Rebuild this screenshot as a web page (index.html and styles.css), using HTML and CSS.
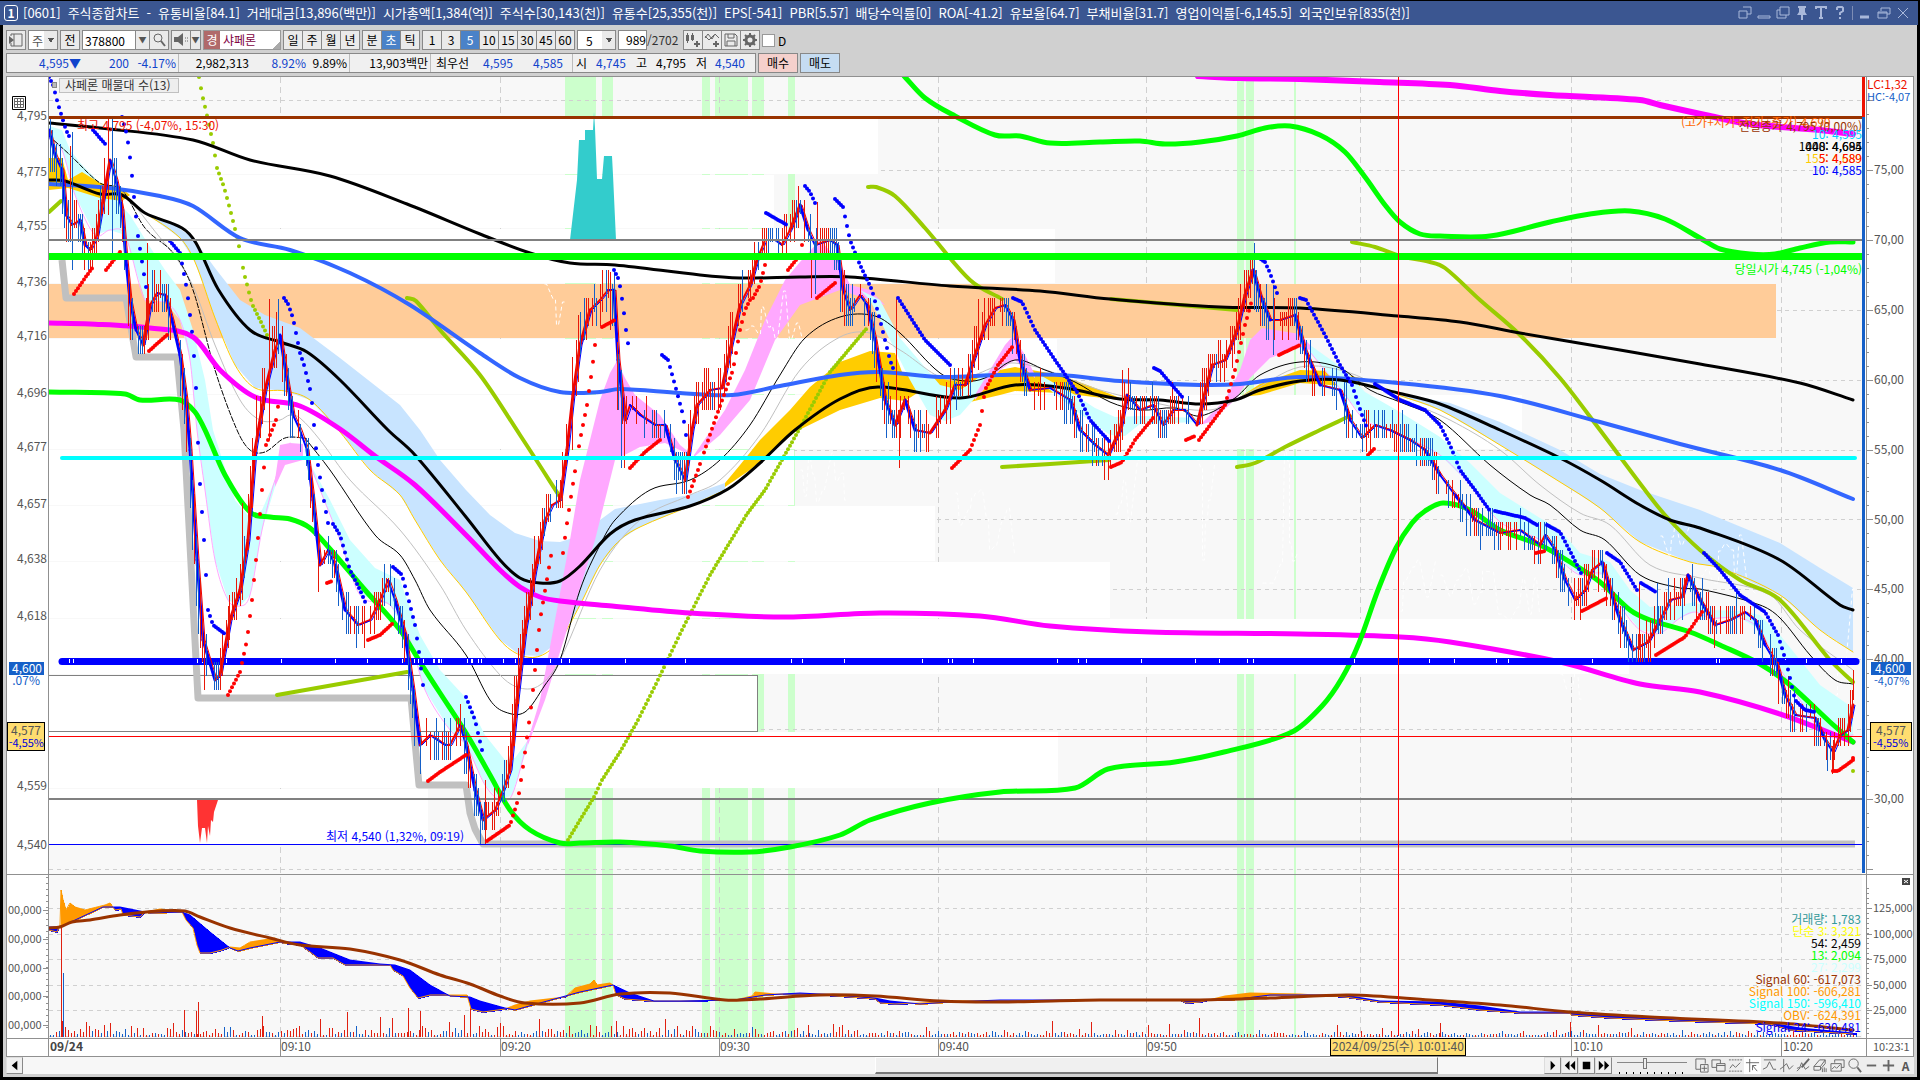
FILE: index.html
```html
<!DOCTYPE html>
<html lang="ko">
<head>
  <meta charset="UTF-8">
  <title>[0601] 주식종합차트</title>
  <link rel="stylesheet" href="styles.css">
</head>
<body>

  <header class="titlebar">
    <span class="badge">1</span>
    <h1 class="stats">
      <span>[0601]</span><span>주식종합차트</span><span>-</span><span>유통비율[84.1]</span><span>거래대금[13,896(백만)]</span><span>시가총액[1,384(억)]</span><span>주식수[30,143(천)]</span><span>유통수[25,355(천)]</span><span>EPS[-541]</span><span>PBR[5.57]</span><span>배당수익률[0]</span><span>ROA[-41.2]</span><span>유보율[64.7]</span><span>부채비율[31.7]</span><span>영업이익률[-6,145.5]</span><span>외국인보유[835(천)]</span>
    </h1>
    <div class="win-btns">
      <button aria-label="분리"><svg viewBox="0 0 14 14"><path d="M5 1h8v7H9M1 5h8v7H1z"/></svg></button>
      <button aria-label="접기"><svg viewBox="0 0 14 14"><path d="M1 10h12v2H1z"/></svg></button>
      <button aria-label="복사"><svg viewBox="0 0 14 14"><path d="M4 1h9v8H4zM4 4H1v8h9V9"/></svg></button>
      <button aria-label="고정"><svg viewBox="0 0 14 14"><path class="fill" d="M3 0h8v2H10v4l2 3H8v5H6V9H2l2-3V2H3z"/></svg></button>
      <button aria-label="글꼴"><svg viewBox="0 0 14 14"><path d="M2 3V1h10v2M7 1v11M5 12h4" stroke-width="2"/></svg></button>
      <button aria-label="도움말"><svg viewBox="0 0 14 14"><path d="M4 4V2l1-1h4l1 1v3L7 7v2M7 11v2" stroke-width="2"/></svg></button>
      <i></i>
      <button aria-label="최소화"><svg viewBox="0 0 14 14"><path d="M2 11h9" stroke-width="3"/></svg></button>
      <button aria-label="이전 크기"><svg viewBox="0 0 14 14"><path d="M4 5V2h9v6h-3M1 6h9v6H1zM1 7h9"/></svg></button>
      <button aria-label="닫기"><svg viewBox="0 0 14 14"><path d="M2 2l10 10M12 2L2 12"/></svg></button>
    </div>
  </header>

  <main class="window">
    <div class="toolbar">
      <button class="tb" aria-label="패널"><svg viewBox="0 0 16 16"><path d="M3 4V2h11v12H3v-3M6 2v12"/><path class="fill" d="M1 4l5 4-5 4z"/></svg></button>
      <select class="sel w-30" aria-label="종류"><option>주</option></select>
      <button class="tb">전</button>
      <div class="group">
        <input class="code" type="text" value="378800" aria-label="종목코드">
        <button class="tb arrow" aria-label="목록">▼</button>
        <button class="tb" aria-label="검색"><svg viewBox="0 0 16 16"><circle cx="7" cy="6" r="4"/><path d="M10 9l4 5" stroke-width="2"/></svg></button>
      </div>
      <div class="group">
        <button class="tb" aria-label="소리"><svg viewBox="0 0 16 16"><path class="fill" d="M1 5h4l5-4v13l-5-4H1z"/><path d="M12 6h1M12 9h1M14 6h1M14 9h1"/></svg></button>
        <button class="tb arrow mini" aria-label="소리 목록">▼</button>
      </div>
      <div class="stock"><b>경</b><span>샤페론</span></div>
      <div class="group"><button class="tb">일</button><button class="tb">주</button><button class="tb">월</button><button class="tb">년</button></div>
      <div class="group"><button class="tb">분</button><button class="tb on">초</button><button class="tb">틱</button></div>
      <div class="group"><button class="tb">1</button><button class="tb">3</button><button class="tb on">5</button><button class="tb">10</button><button class="tb">15</button><button class="tb">30</button><button class="tb">45</button><button class="tb">60</button></div>
      <select class="sel w-39" aria-label="간격"><option>5</option></select>
      <div class="count"><input type="text" value="989" aria-label="표시 봉수"><span>/2702</span></div>
      <div class="group">
        <button class="tb" aria-label="차트 추가"><svg viewBox="0 0 16 16"><path class="fill" d="M1 3h3v6H1zM6 3h3v5H6z"/><path d="M2.5 1v10M7.5 1v8"/><path d="M9 12h6M12 9v6" stroke-width="2"/></svg></button>
        <button class="tb" aria-label="지표 추가"><svg viewBox="0 0 16 16"><path d="M1 6l3-4 4 5 3-5 4 4M1 4l4 4 5-5"/><path d="M9 12h6M12 9v6" stroke-width="2"/></svg></button>
        <button class="tb" aria-label="저장"><svg viewBox="0 0 16 16"><path d="M2 2h10l2 2v10H2zM5 2v4h6V2M4 14V9h8v5"/></svg></button>
        <button class="tb" aria-label="설정"><svg viewBox="0 0 16 16"><circle cx="8" cy="8" r="4" stroke-width="3"/><path d="M8 1v3M8 12v3M1 8h3M12 8h3M3 3l2 2M11 11l2 2M13 3l-2 2M5 11l-2 2" stroke-width="2"/></svg></button>
      </div>
      <label class="chk"><input type="checkbox">D</label>
    </div>

    <div class="toolbar">
      <div class="quote">
        <div class="seg s1 down"><span>4,595▼</span><span>200</span><span>-4.17%</span></div>
        <div class="seg s2"><span>2,982,313</span><span class="down">8.92%</span><span>9.89%</span></div>
        <div class="seg s3"><span>13,903백만</span></div>
        <div class="seg s4"><span>최우선</span><span class="down">4,595</span><span class="down">4,585</span></div>
        <div class="seg s5"><span>시</span><span class="down">4,745</span><span>고</span><span>4,795</span><span>저</span><span class="down">4,540</span></div>
      </div>
      <button class="order buy">매수</button>
      <button class="order sell">매도</button>
    </div>

    <svg id="chart" class="chart" viewBox="6 76 1908 981" preserveAspectRatio="none" role="img" aria-label="샤페론 5초 차트"></svg>

    <footer class="bottom">
      <button class="sb" aria-label="왼쪽"><svg viewBox="0 0 16 16"><path class="blk" d="M11 3v10L5 8z"/></svg></button>
      <div class="track"><div class="thumb"></div></div>
      <button class="sb" aria-label="재생"><svg viewBox="0 0 16 16"><path class="blk" d="M6 3v10l5-5z"/></svg></button>
      <button class="sb" aria-label="뒤로"><svg viewBox="0 0 16 16"><path class="blk" d="M8 3v10L3 8zM14 3v10L9 8z"/></svg></button>
      <button class="sb" aria-label="정지"><svg viewBox="0 0 16 16"><path class="blk" d="M4 4h8v8H4z"/></svg></button>
      <button class="sb" aria-label="앞으로"><svg viewBox="0 0 16 16"><path class="blk" d="M3 3v10l5-5zM9 3v10l5-5z"/></svg></button>
      <input class="speed" type="range" min="0" max="10" value="4" aria-label="속도">
      <div class="tools">
        <button aria-label="영역 추가"><svg viewBox="0 0 16 16"><path d="M7 12H2V1h10v5M7 7h8v8H7zM11 8v6M8 11h6"/></svg></button>
        <button aria-label="겹치기"><svg viewBox="0 0 16 16"><path d="M6 10H1V2h9v4M6 6h9v8H6zM6 8h9"/></svg></button>
        <button aria-label="추세"><svg viewBox="0 0 16 16"><path d="M1 2h14M1 14h14" stroke-dasharray="2 1"/><path d="M2 11l3-4 3 3 5-5"/></svg></button>
        <button class="act" aria-label="십자선"><svg viewBox="0 0 16 16"><path d="M5 1v14M1 5h14M8 8l5 6M8 8h4M8 8v5"/></svg></button>
        <button aria-label="수평선"><svg viewBox="0 0 16 16"><path d="M2 2h13M1 12l4-2 3-6 4 8h3"/></svg></button>
        <button aria-label="수직선"><svg viewBox="0 0 16 16"><path d="M5 1v14M1 12l4-3 3-3 3 6 4-4"/></svg></button>
        <button aria-label="그리기"><svg viewBox="0 0 16 16"><path d="M1 14l4-4M1 11l3-1 2-5 4 7 4-3"/><path d="M6 10l8-9" stroke-width="2"/></svg></button>
        <button aria-label="지우개"><svg viewBox="0 0 16 16"><path d="M1 9l6-7h6L8 9zM1 9v4h6l6-7V2M8 9v4M10 11v4M12 10v5M14 11v4"/></svg></button>
        <button aria-label="창 배열"><svg viewBox="0 0 16 16"><path d="M5 5V2h10v8h-3M1 6h11v8H1zM2 12l3-3 2 2 4-4"/></svg></button>
        <button aria-label="돋보기"><svg viewBox="0 0 16 16"><circle cx="7" cy="6" r="5"/><path d="M11 10l4 5" stroke-width="2"/></svg></button>
        <button aria-label="축소"><svg viewBox="0 0 16 16"><path d="M3 8h10" stroke-width="2"/></svg></button>
        <button aria-label="확대"><svg viewBox="0 0 16 16"><path d="M2 8h12M8 2v12" stroke-width="2"/></svg></button>
        <button aria-label="자동">A</button>
      </div>
    </footer>
  </main>

  <script src="chart.js"></script>
</body>
</html>
```
FILE: styles.css
```css
* {
  box-sizing: border-box;
}
body {
  margin: 0;
  padding: 1px 0 3px;
  height: 100vh;
  background: #000;
  display: flex;
  flex-direction: column;
  font-family: "Noto Sans CJK KR", sans-serif;
  font-size: 12px;
  color: #000;
  overflow: hidden;
}
button, input, select {
  font: inherit;
  color: inherit;
  margin: 0;
  padding: 0;
  border-radius: 0;
}
svg {
  fill: none;
  stroke: #666;
}
svg .fill {
  fill: #666;
  stroke: none;
}
svg .blk {
  fill: #000;
  stroke: none;
}

/* title bar */
.titlebar {
  height: 24px;
  flex: none;
  display: flex;
  align-items: center;
  background: #3b5691;
  color: #fff;
  padding: 0 8px 0 4px;
  margin-right: 2px;
}
.badge {
  width: 14px;
  height: 16px;
  border: 1px solid #fff;
  border-radius: 3px;
  font-weight: bold;
  line-height: 14px;
  text-align: center;
  margin-right: 5px;
}
.stats {
  display: flex;
  gap: 7px;
  margin: 0;
  flex: 1;
  font-size: 13px;
  font-weight: normal;
  line-height: 22px;
  white-space: nowrap;
}
.win-btns {
  display: flex;
  align-items: center;
  gap: 5px;
}
.win-btns button {
  border: 0;
  background: none;
  width: 14px;
  height: 14px;
}
.win-btns svg {
  display: block;
  width: 14px;
  height: 14px;
  stroke: #a9b8da;
}
.win-btns .fill {
  fill: #a9b8da;
}
.win-btns i {
  width: 1px;
  height: 14px;
  background: #7d8db5;
}

/* window body */
.window {
  flex: 1;
  min-height: 0;
  display: flex;
  flex-direction: column;
  margin: 0 3px;
  padding: 5px 3px 3px;
  background: #d0d0d0;
}
.toolbar {
  flex: none;
  height: 20px;
  margin-bottom: 3px;
  display: flex;
  gap: 2px;
}
.group {
  display: flex;
}
.group > * + * {
  margin-left: -1px;
}
.tb {
  width: 20px;
  height: 20px;
  border: 1px solid #888;
  background: #eaeaea;
  line-height: 16px;
  text-align: center;
}
.tb svg {
  display: block;
  width: 16px;
  height: 16px;
  margin: 1px;
}
.tb.on {
  background: #4a82c8;
  color: #fff;
}
.tb.arrow {
  width: 15px;
  font-size: 8px;
  color: #555;
}
.tb.mini {
  width: 11px;
}
.sel {
  appearance: none;
  height: 20px;
  border: 1px solid #888;
  padding-left: 3px;
  background:
    linear-gradient(to top right, transparent 50%, #555 50%) right 6px top 7px / 3px 5px no-repeat,
    linear-gradient(to top left, transparent 50%, #555 50%) right 3px top 7px / 3px 5px no-repeat,
    linear-gradient(#eaeaea, #eaeaea) right / 13px 100% no-repeat,
    #fff;
}
.w-30 {
  width: 30px;
  color: #555;
}
.w-39 {
  width: 39px;
  padding-left: 8px;
}
.code {
  width: 54px;
  height: 20px;
  border: 1px solid #888;
  background: #fff;
  padding-left: 2px;
}
.stock {
  width: 78px;
  background: linear-gradient(to bottom right, transparent 50%, #aaa 50%) right bottom / 7px 7px no-repeat, #fff;
  border: 1px solid #999;
  color: #800040;
  display: flex;
  gap: 3px;
  line-height: 18px;
}
.stock b {
  width: 16px;
  background: #b06a6a;
  color: #fff;
  font-weight: normal;
  text-align: center;
}
.count {
  display: flex;
  width: 63px;
  line-height: 20px;
  color: #333;
}
.count input {
  width: 29px;
  height: 20px;
  border: 1px solid #888;
  background: #fff;
  text-align: right;
  color: #000;
}
.chk {
  display: flex;
  align-items: center;
  gap: 3px;
}
.chk input {
  appearance: none;
  width: 13px;
  height: 13px;
  background: #fff;
  border: 1px solid #999;
}
.quote {
  display: flex;
  width: 750px;
  background: #f0f0f0;
  border: 1px solid #888;
  line-height: 18px;
}
.seg {
  display: grid;
  border-right: 1px solid #bbb;
  padding-right: 2px;
  text-align: right;
  white-space: nowrap;
}
.seg:last-child {
  border: 0;
}
.s1 {
  width: 172px;
  grid-template-columns: 74px 48px 1fr;
}
.s2 {
  width: 171px;
  grid-template-columns: 70px 57px 1fr;
}
.s3 {
  width: 81px;
}
.s4 {
  width: 142px;
  padding-right: 9px;
  grid-template-columns: 38px 44px 1fr;
}
.s5 {
  flex: 1;
  padding-right: 10px;
  grid-template-columns: 14px 39px 21px 39px 21px 1fr;
}
.down {
  color: #1144cc;
}
.order {
  width: 40px;
  border: 1px solid #888;
  line-height: 16px;
}
.buy {
  background: #f5d0cc;
}
.sell {
  background: #c5dcf2;
}

/* chart */
.chart {
  flex: 1;
  min-height: 0;
  width: 100%;
  display: block;
  background: #fff;
}
.chart text {
  font-size: 12px;
  stroke: none;
  fill: #555;
}
.chart .axis {
  font-size: 11px;
}
.chart .end {
  text-anchor: end;
}
.chart .strong {
  font-weight: bold;
}

/* scroll bar and drawing tools */
.bottom {
  flex: none;
  height: 17px;
  display: flex;
  background: #eee;
}
.sb {
  width: 17px;
  height: 17px;
  border: 1px outset #ddd;
  background: #f0f0f0;
}
.sb svg {
  display: block;
  width: 15px;
  height: 15px;
}
.track {
  flex: 1;
  background: #f7f7f7;
  display: flex;
}
.thumb {
  width: 37%;
  margin-left: 56%;
  background: #f0f0f0;
  border: 1px solid #fff;
  border-right-color: #777;
  border-bottom: 2px solid #777;
}
.speed {
  appearance: none;
  width: 70px;
  height: 17px;
  margin: 0 6px 0 5px;
  background: linear-gradient(#888, #888) 0 5px / 100% 1px no-repeat,
    repeating-linear-gradient(90deg, #000 0 1px, transparent 1px 7px) 2px 15px / 68px 2px no-repeat;
}
.speed::-webkit-slider-thumb {
  appearance: none;
  width: 4px;
  height: 11px;
  margin-top: -4px;
  background: #eee;
  border: 1px solid #777;
}
.tools {
  display: flex;
}
.tools button {
  width: 17px;
  height: 17px;
  border: 0;
  background: none;
  font-weight: bold;
  line-height: 17px;
  color: #555;
}
.tools .act {
  background: #fff;
}
.tools svg {
  display: block;
  width: 15px;
  height: 15px;
  margin: 1px;
}
```
FILE: chart.js
```js
const svg = document.getElementById('chart');
let out = '';

let seed = 7;
function rnd() {
  seed = (seed * 16807) % 2147483647;
  return seed / 2147483647;
}

// "x,y x,y ..." -> [[x, y], ...]
function pts(s) {
  return s.trim().split(/\s+/).map(p => p.split(',').map(Number));
}

function at(p, x) {
  for (let i = 1; i < p.length; i++) {
    if (x <= p[i][0]) {
      const t = (x - p[i - 1][0]) / (p[i][0] - p[i - 1][0] || 1);
      return p[i - 1][1] + (p[i][1] - p[i - 1][1]) * t;
    }
  }
  return p[p.length - 1][1];
}

// smooth curve through the points
function smooth(p) {
  let d = 'M' + p[0];
  for (let i = 0; i < p.length - 1; i++) {
    const a = p[i - 1] || p[i], b = p[i], c = p[i + 1], e = p[i + 2] || c;
    const h = (c[0] - b[0]) / 3;
    const m1 = (c[1] - a[1]) / (c[0] - a[0] || 1);
    const m2 = (e[1] - b[1]) / (e[0] - b[0] || 1);
    d += `C${b[0] + h},${(b[1] + m1 * h).toFixed(1)} ${c[0] - h},${(c[1] - m2 * h).toFixed(1)} ${c}`;
  }
  return d;
}

function rect(x, y, x2, y2, fill) {
  out += `<rect x="${x}" y="${y}" width="${x2 - x}" height="${y2 - y}" fill="${fill}" stroke="none"/>`;
}
function line(x, y, x2, y2, color, w = 1, extra = '') {
  const o = w % 2 ? 0.5 : 0;
  out += `<path d="M${x + (x === x2 ? o : 0)} ${y + (y === y2 ? o : 0)}L${x2 + (x === x2 ? o : 0)} ${y2 + (y === y2 ? o : 0)}" stroke="${color}" stroke-width="${w}" ${extra}/>`;
}
function curve(s, color, w, extra = '') {
  out += `<path d="${smooth(pts(s))}" stroke="${color}" stroke-width="${w}" stroke-linecap="round" stroke-linejoin="round" ${extra}/>`;
}
function poly(s, color, w, extra = '') {
  out += `<polyline points="${s}" stroke="${color}" stroke-width="${w}" stroke-linejoin="round" ${extra}/>`;
}
function area(up, low, fill) {
  const l = pts(low);
  out += `<polygon points="${up} ${l.sort((a, b) => b[0] - a[0]).join(' ')}" fill="${fill}" stroke="none"/>`;
}
function dots(s, color, step = 2, r = 2) {
  const p = pts(s);
  for (let x = p[0][0]; x <= p[p.length - 1][0]; x += step) {
    out += `<circle cx="${x}" cy="${at(p, x).toFixed(1)}" r="${r}" fill="${color}" stroke="none"/>`;
  }
}
function text(x, y, t, color = '#555', cls = '') {
  out += `<text x="${x}" y="${y}" class="${cls}" style="fill:${color}">${t}</text>`;
}

/* ---------- background ---------- */
rect(49, 77, 1862, 1038, '#f8f8f8');
for (const [a, b] of [[565, 596], [602, 613], [702, 710], [715, 748], [752, 764], [788, 795], [1237, 1244], [1246, 1254], [1294, 1296]]) {
  rect(a, 77, b, 1038, '#ccffcc');
}
const gridX = [280, 500, 719, 938, 1146, 1360, 1571, 1781];
for (let i = 0; i < 12; i++) line(49, Math.round(100 + i * 69.9), 1862, Math.round(100 + i * 69.9), '#d0d0d0', 1, 'stroke-dasharray="4 4"');
for (const y of [908, 934, 959, 985, 1010, 1036]) line(49, y, 1862, y, '#d0d0d0', 1, 'stroke-dasharray="4 4"');
for (const x of gridX) line(x, 77, x, 1038, '#d0d0d0', 1, 'stroke-dasharray="6 4"');

// volume by price
for (const [y, y2, x] of [[119, 174, 878], [175, 228, 774], [229, 283, 1055], [339, 394, 1057], [395, 449, 1522], [450, 505, 794], [506, 561, 935], [562, 618, 1110], [619, 674, 1629], [675, 731, 757], [732, 788, 1058], [789, 844, 428]]) {
  rect(49, y, x, y2, '#fff');
}
rect(49, 284, 1776, 338, '#ffcc99');
line(49, 675, 757, 675, '#808080');
line(49, 731, 757, 731, '#808080');
line(757, 675, 757, 732, '#808080');

/* ---------- clouds ---------- */
const blueUp = '145,213 170,222 193,238 215,268 240,300 265,315 300,328 340,358 400,405 420,430 440,460 466,490 490,515 515,533 540,541 560,542 580,536 600,520 615,509 660,500 690,495 725,483';
const goldLow = '145,213 180,238 195,262 215,318 235,365 255,388 285,391 310,400 340,432 370,470 400,495 415,520 440,560 466,592 500,640 520,655 540,656 560,640 580,605 600,565 620,540 640,527 690,506 725,490';
area(blueUp, goldLow, '#c8e4ff');
curve(goldLow, '#ffcc00', 1);
const blueUp2 = '1398,393 1450,403 1500,422 1560,450 1600,474 1640,490 1700,510 1780,543 1820,568 1853,588';
const goldLow2 = '1398,395 1440,410 1500,445 1560,482 1600,508 1640,542 1690,562 1720,568 1780,595 1820,630 1853,652';
area(blueUp2, goldLow2, '#c8e4ff');
curve(goldLow2, '#ffcc00', 1);

area('49,126 62,130 70,150 82,165 100,183 130,215 150,247 165,270 180,290 193,330 205,380 213,430 235,500 250,518 262,510 275,480',
  '49,138 62,150 75,195 95,235 110,230 125,235 145,300 165,302 180,320 190,360 197,430 205,490 215,560 228,600 240,606 250,595 262,530 275,487', '#ccffff');
curve('49,138 62,150 75,195 95,235 110,230 125,235 145,300 165,302 180,320 190,360 197,430 205,490 215,560 228,600 240,606 250,595 262,530 275,480 290,443', '#ffa8ff', 1);
area('275,480 280,445 290,443 303,444', '275,487 285,465 303,460', '#ffa8ff');
area('308,460 330,500 350,540 375,568 400,580 420,635 440,670 466,698 485,735 505,760 515,758 528,740',
  '308,460 340,540 360,595 390,605 410,640 425,690 450,730 466,745 485,785 500,800 512,795 528,745', '#ccffff');
curve('308,460 340,540 360,595 390,605 410,640 425,690 450,730 466,745 485,785 500,800 512,795 528,740', '#ffa8ff', 1);
area('528,740 540,700 555,620 570,540 580,480 590,440 600,400 610,373 617,361 625,378 635,395 660,415 680,445 690,453',
  '690,455 665,443 640,447 615,460 605,500 595,540 570,620 545,700 528,745', '#ffa8ff');
area('49,158 62,158 68,180 82,172 100,183 120,187 130,195', '122,201 100,198 68,188 49,190', '#ffcc00');
area('725,483 740,465 760,440 790,410 810,387 840,362 870,351 895,353 902,372 940,377 970,378 1000,370 1015,367 1060,375 1090,386 1120,398',
  '725,487 750,470 795,432 840,410 880,398 905,401 925,388 970,402 1000,395 1015,391 1060,393 1120,400', '#ffcc00');
area('694,455 725,410 745,370 765,320 785,280 800,262 820,240 840,262 850,285 870,290 885,305',
  '885,305 840,290 800,305 775,340 750,400 720,435 694,457', '#ffa8ff');
area('860,290 880,300 900,338 940,385 960,390 990,370', '870,300 890,340 910,380 930,415 945,421 960,415 975,398 990,378', '#ccffff');
area('975,395 990,370 1005,345 1013,336 1025,355 1035,375', '1035,378 1015,360 1000,370 975,400', '#ffa8ff');
area('1040,375 1075,395 1095,408 1115,417 1140,416 1200,418', '1040,382 1075,410 1110,435 1125,436 1140,424 1200,422', '#ccffff');
area('1240,397 1260,384 1300,370 1330,371 1360,378', '1360,386 1330,385 1300,383 1260,395', '#ffcc00');
area('1200,425 1225,400 1240,370 1250,340 1262,328 1300,334 1310,345', '1310,350 1300,347 1270,358 1250,378 1235,400 1210,422', '#ffa8ff');
const pinkLow = '1310,352 1345,395 1365,420 1400,435 1440,455 1470,485 1500,522 1540,540 1560,560 1580,575 1605,575 1620,605 1640,630 1660,633 1680,618 1695,612 1710,618 1740,618 1760,630 1775,660 1800,700 1825,735 1853,735';
area('1310,345 1345,370 1365,392 1400,412 1440,437 1470,463 1500,493 1540,518 1560,530 1580,553 1610,562 1630,590 1650,607 1680,605 1695,602 1710,610 1740,611 1760,615 1780,635 1800,660 1820,685 1853,708', pinkLow, '#ccffff');
curve(pinkLow, '#ffa8ff', 1);

/* ---------- faint volume traces ---------- */
const traces = [[544, 566, 284, 340], [745, 805, 284, 345], [800, 845, 450, 505], [955, 1015, 455, 560], [1115, 1145, 450, 540], [1195, 1220, 450, 560], [1262, 1300, 450, 600], [1400, 1440, 560, 618], [1440, 1545, 565, 620], [1560, 1580, 660, 700], [1660, 1695, 495, 560], [1700, 1760, 530, 600], [1835, 1853, 585, 700]];
for (const [a, b, y, y2] of traces) {
  let s = '';
  for (let x = a; x < b; x += 2 + Math.floor(rnd() * 8)) {
    const v = Math.round(y + (y2 - y) * rnd());
    s += `${x}.5,${v} ${x + 2}.5,${v} `;
  }
  poly(s, '#fff', 1, 'stroke-dasharray="4 3"');
}

/* ---------- thin averages ---------- */
curve('122,190 150,225 190,280 215,345 240,400 260,420 280,420 290,415 300,418 320,440 350,480 400,530 440,585 466,630 500,675 520,688 540,685 560,660 600,570 640,520 690,495 720,480 760,435 800,370 840,337 870,333 900,350 950,380 1015,363 1100,390 1150,402 1210,410 1250,392 1300,367 1350,373 1400,398 1450,420 1500,450 1540,485 1580,513 1610,525 1650,565 1700,578 1770,595 1800,630 1853,670', '#c0c0c0', 1);
curve('49,136 70,155 100,183 122,190 145,228 175,255 193,290 215,370 237,430 250,450 265,452 285,438 305,438', '#000', 1, 'stroke-dasharray="5 2"');
curve('305,438 330,470 375,535 400,555 415,580 430,610 466,655 490,700 505,712 525,712 545,685 560,660 580,590 600,545 615,520 650,490 690,480 720,460 750,425 780,375 805,338 840,317 875,316 900,333 940,373 965,381 985,378 1015,360 1045,370 1075,382 1110,402 1140,410 1175,408 1200,416 1235,398 1260,375 1300,362 1340,368 1370,390 1400,402 1440,420 1490,465 1530,495 1550,505 1580,530 1605,540 1640,575 1680,588 1700,589 1760,605 1780,618 1810,655 1835,680 1853,684', '#000', 1);

/* ---------- histogram marks ---------- */
out += '<polygon points="570,240 577,180 579,140 585,140 585,130 593,130 594,112 595,128 597,179 602,179 604,156 612,156 613,175 616,240" fill="#33cccc" stroke="none"/>';
out += '<polygon points="197,800 218,800 214,812 213,822 211,820 210,836 208,826 207,843 205,828 202,828 200,843 198,826" fill="#ff3333" stroke="none"/>';

/* ---------- levels and slow averages ---------- */
poly('62,260 66,298 126,298 136,357 177,357 184,430 198,698 411,698 419,785 466,785 470,813 475,829 483,844 1855,844', '#c0c0c0', 7);
line(49, 799, 1862, 799, '#808080', 2);
line(49, 844, 1862, 844, '#0000ff');

const olive = '#99cc00';
dots('199,77 202,94 206,111 213,143 217,168 224,187 231,213 238,241 244,273 252,304 260,320 268,337', olive);
dots('568,840 580,820 594,797 602,780 620,752 637,722 655,686 682,630 710,575 747,514 765,490 800,428 830,372 867,328', olive, 2);
for (const s of ['49,212 61,201', '407,298 416,301 440,330 480,375 520,435 560,497', '277,695 407,672', '868,187 876,187 895,196 925,228 970,280 1002,299', '1002,467 1050,464 1109,460', '1237,467 1255,463 1285,447 1320,430 1350,416', '1111,299 1237,310', '1352,242 1375,247 1400,256 1430,262 1445,268 1480,300 1520,335 1560,378 1600,430 1645,490 1665,515 1700,550 1740,580 1780,600 1830,660 1853,682']) {
  curve(s, olive, 4);
}

curve('49,184 110,188 160,196 193,206 240,238 290,250 350,273 410,305 480,353 520,378 560,392 600,392 620,389 680,393 732,395 780,386 840,375 880,372 940,377 1000,375 1060,375 1120,381 1200,385 1240,384 1300,377 1398,383 1500,396 1600,422 1680,444 1780,470 1853,499', '#3366ff', 4);
curve('49,123 100,128 193,140 250,160 330,176 407,204 480,234 530,253 570,263 615,265 700,275 740,278 800,277 850,277 950,286 1040,291 1110,299 1220,307 1300,308 1398,316 1460,322 1520,333 1620,350 1700,364 1800,383 1853,400', '#000', 3);
curve('49,180 65,181 100,194 122,195 145,213 182,228 196,243 218,289 250,330 280,342 307,352 340,380 388,430 415,455 466,517 500,560 520,578 540,583 560,581 580,566 610,534 635,520 690,506 728,489 760,463 795,430 840,399 878,387 960,398 1015,385 1065,388 1120,399 1160,400 1200,404 1235,400 1260,390 1300,381 1340,380 1398,393 1440,404 1500,430 1560,458 1600,480 1640,505 1670,520 1700,528 1780,560 1840,605 1853,610', '#000', 3);
curve('49,323 90,324 150,328 193,337 220,370 255,397 300,406 340,429 375,456 415,485 466,535 500,570 520,587 540,597 560,601 612,606 690,613 784,617 880,613 980,616 1050,626 1150,632 1300,634 1400,637 1450,642 1560,662 1640,684 1700,692 1780,714 1853,742', '#ff00ff', 5);
curve('1198,76 1240,78 1300,79 1380,82 1450,85 1500,91 1550,95 1640,100 1660,105 1710,116 1750,124 1820,130 1853,134', '#ff00ff', 6);
curve('904,76 925,98 955,116 995,135 1020,136 1050,143 1100,142 1140,141 1165,144 1200,142 1237,136 1265,128 1290,126 1320,135 1345,152 1365,177 1385,205 1400,222 1420,234 1440,236 1490,236 1550,222 1590,214 1630,211 1665,219 1700,238 1720,249 1750,254 1775,254 1800,248 1830,242 1853,242', '#00ff00', 5);
curve('49,392 125,394 140,400 180,400 195,412 205,430 225,475 250,512 270,517 290,519 310,528 330,549 365,590 400,630 420,662 440,693 466,733 490,775 510,810 530,830 560,843 580,843 620,842 670,846 700,851 750,852 790,847 840,835 870,820 930,803 1000,792 1075,788 1108,769 1175,762 1224,752 1292,732 1322,706 1342,678 1359,643 1378,590 1396,548 1412,523 1425,511 1443,503 1470,510 1500,530 1540,545 1570,562 1600,582 1630,610 1650,620 1690,632 1720,645 1760,664 1790,685 1830,722 1853,742', '#00ff00', 5);

line(62, 661, 1856, 661, '#0000ff', 7, 'stroke-linecap="round"');
for (let i = 0; i < 60; i++) {
  const x = i < 20 ? Math.round(400 + rnd() * 170) : Math.round(62 + rnd() * 1790);
  line(x, 659, x, 663, '#fff');
}

/* ---------- candles ---------- */
const price = pts('49,130 55,155 62,170 66,215 72,225 80,220 85,245 90,250 97,235 103,200 110,160 116,180 122,210 126,260 130,300 136,330 143,345 150,305 157,293 165,295 172,320 180,355 186,400 190,450 197,560 203,640 215,680 220,675 230,620 240,590 248,540 255,450 265,390 275,350 280,335 287,380 293,415 300,430 307,450 313,500 320,565 328,550 335,565 345,610 358,625 370,620 380,600 388,580 395,600 405,635 413,690 420,745 430,735 445,745 450,745 460,725 466,745 475,790 483,820 495,810 503,790 510,770 517,700 525,630 535,570 545,520 552,505 560,500 567,450 573,395 580,345 590,310 600,300 608,290 614,290 618,360 625,420 630,405 640,415 655,425 665,425 675,460 685,480 692,430 697,405 710,390 722,388 730,350 740,305 750,285 757,260 765,240 775,240 782,245 790,230 800,205 808,230 815,245 830,240 837,245 843,290 850,310 860,295 867,305 875,340 885,400 895,425 905,400 915,430 930,433 945,410 955,385 965,385 975,355 985,325 995,308 1005,305 1013,320 1020,360 1030,390 1050,388 1070,400 1080,430 1095,445 1108,455 1120,430 1127,395 1140,410 1153,405 1163,425 1173,410 1185,410 1197,425 1203,400 1212,365 1225,360 1237,330 1245,295 1253,270 1260,295 1270,320 1280,320 1295,315 1305,350 1320,385 1340,390 1350,420 1362,438 1375,425 1390,430 1410,440 1425,450 1440,475 1455,495 1475,520 1500,533 1520,530 1540,545 1545,535 1555,550 1565,580 1575,600 1585,590 1592,570 1602,562 1610,590 1620,620 1633,650 1648,642 1660,620 1670,600 1682,597 1688,575 1700,600 1715,625 1730,620 1745,612 1755,620 1765,645 1777,665 1785,695 1795,715 1815,718 1825,740 1833,752 1840,735 1848,730 1853,705');
const tick = 14;
const snap = y => 844 - Math.round((844 - y) / tick) * tick;
// fast average pair, coloured by direction
for (let i = 1; i < price.length; i++) {
  const a = price[i - 1], b = price[i], up = b[1] < a[1];
  const w = Math.abs(b[1] - a[1]) > 20 ? 3 : 2;
  line(a[0], a[1], b[0], b[1], up ? '#f00000' : '#0000ff', w, 'stroke-linecap="round"');
  line(a[0] + 2, a[1], b[0] + 2, b[1], up ? '#0000ff' : '#f00000', 1);
}
for (let x = 50; x < 1854; x += 2) {
  const y = at(price, x), slope = at(price, x + 3) - at(price, x - 3);
  const r = rnd(), r2 = rnd(), r3 = rnd(), r4 = rnd();
  if (r < 0.25) continue;
  const top = snap(y - 5 - r2 * 16 - Math.max(0, -slope) / 2);
  const low = snap(y + 5 + r3 * 16 + Math.max(0, slope) / 2);
  const up = r4 < (slope < 0 ? 0.85 : 0.35);
  line(x, top, x, Math.min(844, Math.max(low, top + 2)), up ? '#e81808' : '#1560c8');
}
// long wicks: x, high, low, rising
for (const [x, a, b, c] of [[70, 146, 240, 1], [72, 132, 270, 0], [108, 118, 215, 1], [112, 118, 253, 0], [147, 243, 330, 1], [269, 299, 440, 1], [278, 299, 350, 0], [229, 595, 640, 1], [242, 503, 600, 1], [485, 780, 844, 1], [578, 315, 380, 1], [572, 357, 450, 1], [610, 272, 330, 1], [617, 342, 410, 1], [621, 370, 468, 0], [624, 400, 468, 1], [811, 258, 298, 1], [815, 240, 294, 0], [817, 202, 245, 1], [896, 299, 410, 1], [899, 410, 468, 1], [978, 299, 370, 1], [1110, 430, 468, 1], [1122, 370, 440, 1], [1254, 243, 310, 0], [1273, 285, 355, 0], [1639, 583, 650, 1], [1657, 583, 630, 0], [1833, 740, 771, 1], [1827, 740, 771, 0], [1853, 670, 700, 1]]) {
  line(x, a, x, b, c ? '#e81808' : '#1560c8');
}

/* ---------- parabolic dots ---------- */
for (const s of ['49,77 53,85 58,104 66,130 70,138', '93,130 106,145', '122,117 127,135 131,165 134,197 138,236 146,287', '170,241 180,253 187,290 193,340 196,388 199,470 204,540 208,610 213,625 225,634', '284,298 288,304 293,318 300,353 304,365 310,389 313,410 315,440 318,465 322,490 328,523', '333,524 340,535 350,570 360,590 366,604', '393,567 402,575 410,605 415,625 419,652 423,685', '466,697 475,720 482,750', '614,270 619,280 623,305 626,330 629,350', '662,355 668,360 675,385 683,415 686,435', '766,213 787,225', '805,186 810,192 815,203', '835,199 843,207 850,240 860,265 872,290 880,320 890,360 893,368', '898,298 925,340 951,366', '1013,298 1022,302 1035,330 1055,360 1077,392 1090,420 1109,441', '1154,368 1160,371 1183,398', '1259,258 1265,262 1270,273 1277,293', '1300,298 1306,300 1325,335 1340,365 1352,385 1362,415 1367,428', '1375,384 1400,400 1425,410 1440,425 1450,445 1460,470 1475,490 1490,511', '1495,511 1525,518 1537,525', '1547,525 1560,532 1572,555 1582,575', '1607,553 1620,562 1637,590', '1641,583 1656,592', '1704,553 1720,570 1740,595 1765,612 1778,635 1787,665 1795,700 1805,710 1815,712']) {
  dots(s, '#0000ff');
}
for (const s of ['74,294 85,278 93,267', '106,270 120,252', '149,351 168,334', '228,695 240,672 247,640 252,600 257,550 262,490 266,445 276,420 279,400', '327,583 332,581', '368,640 380,635 392,624', '428,781 440,772 466,755', '487,841 510,825 518,800 524,760 532,700 540,620 552,550', '563,553 566,530 572,490 580,440 587,405 592,370 595,345', '602,327 615,320', '630,468 645,452 660,440', '688,497 698,470 715,420 733,370 740,330 745,310 750,300', '753,298 760,285 765,265', '788,270 800,255 803,240', '817,298 835,283', '952,468 970,450 980,425 985,390 998,365 1013,346', '1111,467 1122,462 1135,440 1153,418', '1186,440 1195,436', '1199,440 1225,405 1235,370 1245,325 1252,300', '1279,355 1300,345', '1368,455 1375,448', '1536,553 1545,551', '1582,611 1607,598', '1656,655 1685,637 1702,612', '1833,771 1838,771 1853,760']) {
  dots(s, '#ff0000');
}
dots('1853,758 1854,758', '#ff0000');
dots('1853,771 1854,771', olive);

line(49, 240, 1862, 240, '#808080', 2);
line(49, 256, 1862, 256, '#00ff00', 7);
line(62, 458, 1855, 458, '#00ffff', 4, 'stroke-linecap="round"');
line(49, 117, 1862, 117, '#993300', 3);
line(49, 736, 1862, 736, '#ff0000');

/* ---------- volume and OBV pane ---------- */
for (let x = 50; x < 1857; x += 3) {
  const big = rnd() > 0.93 ? rnd() * 22 : 0;
  const k = x < 860 ? 1 : 0.45;
  const h = Math.round(2 + rnd() * rnd() * 13 * k + big * (x < 860 ? 0.7 : 0.5));
  line(x, 1037 - h, x, 1037, rnd() < 0.25 + h / 16 ? '#e02010' : '#1560c8');
}
for (const [x, h, c] of [[61, 138, 1], [63, 64, 0], [184, 27, 1], [196, 26, 1], [198, 35, 1], [262, 21, 1], [392, 19, 1], [408, 29, 1], [420, 26, 1], [470, 30, 1], [616, 16, 1], [808, 12, 1], [1199, 19, 1], [1440, 14, 1], [1570, 15, 1]]) {
  line(x, 1037 - h, x, 1037, c ? '#e02010' : '#1560c8');
}
const sig = pts('49,927 60,927 103,907 120,907 150,913 182,912 190,915 210,932 230,948 238,951 250,948 280,942 300,942 320,948 350,960 380,964 395,965 410,970 430,985 450,996 470,997 480,1001 505,1008 515,1010 540,1003 580,992 613,985 630,993 654,1001 680,1001 735,1000 765,995 800,993 840,995 875,998 890,1001 920,1004 950,1002 1000,1000 1230,1000 1270,995 1345,995 1380,1001 1440,1002 1480,1006 1520,1012 1570,1012 1610,1016 1680,1020 1770,1023 1800,1028 1853,1033');
const obv = pts('49,930 57,932 60,925 61,890 63,900 66,910 70,903 75,907 85,910 105,905 110,903 115,910 121,909 123,915 140,917 145,912 160,909 182,912 186,920 193,928 197,945 200,953 210,953 222,950 230,947 240,948 250,942 275,938 282,943 300,945 310,952 318,958 333,958 345,965 390,965 393,970 403,976 410,988 418,998 430,995 467,995 471,1009 483,1012 505,1009 515,1005 530,1001 565,997 575,988 590,984 594,980 597,985 610,983 613,985 616,995 625,999 650,1001 680,1001 735,1000 752,996 755,992 775,994 810,994 850,997 875,999 880,1003 895,1004 920,1003 960,1001 1180,1000 1186,1003 1200,1002 1225,996 1250,993 1300,994 1345,997 1380,1002 1440,1005 1480,1010 1520,1013 1570,1013 1571,1015 1610,1018 1680,1021 1770,1024 1790,1030 1853,1034');
for (let x = 49; x < 1857; x++) {
  const a = at(obv, x), b = at(sig, x);
  line(x, Math.round(Math.min(a, b)), x, Math.round(Math.max(a, b)) + 1, a < b ? '#ff9900' : '#0000ff');
}
poly(obv.join(' '), '#ff9900', 1);
poly(sig.join(' '), '#0000ff', 1);
curve('49,928 60,927 72,922 90,920 120,915 160,911 185,911 200,917 230,928 270,938 300,945 350,949 400,960 440,975 470,984 500,996 525,1003 580,1003 620,994 670,993 725,1000 760,999 820,995 875,996 940,1001 1000,1002 1100,1000 1200,1000 1270,998 1350,995 1430,1000 1500,1005 1570,1012 1650,1017 1780,1023 1853,1030', '#993300', 3);

/* ---------- frame and axes ---------- */
const frame = '#909090';
rect(1862, 77, 1865, 117, '#ee1100');
rect(1862, 117, 1865, 873, '#1560c8');
rect(6, 76, 49, 1057, '#fff');
rect(1866, 76, 1914, 1057, '#fff');
rect(6, 1038, 1914, 1057, '#fff');
line(6, 76, 1914, 76, frame);
line(6, 874, 1914, 874, frame);
line(6, 1038, 1914, 1038, frame);
line(6, 1056, 1914, 1056, frame);
line(6, 76, 6, 1057, frame);
line(48, 76, 48, 1057, frame);
line(1866, 76, 1866, 1057, frame);
line(1913, 76, 1913, 1057, frame);
for (const x of gridX) if (x !== 1360) line(x, 1038, x, 1057, frame);

[['4,795', 120], ['4,775', 176], ['4,755', 230], ['4,736', 286], ['4,716', 340], ['4,696', 397], ['4,677', 451], ['4,657', 508], ['4,638', 563], ['4,618', 620], ['4,559', 790], ['4,540', 849]].forEach(([t, y]) => text(47, y, t, '#555', 'end'));
[910, 939, 968, 996, 1025].forEach(y => {
  text(8, y + 4, '00,000', '#555', 'axis');
  line(43, y, 48, y, frame);
});
for (let y = 877; y < 1030; y += 6) line(46, y, 48, y, frame);
for (let i = 0; i <= 55; i++) {
  const y = Math.round(100 + i * 13.98);
  line(1867, y, i % 5 ? 1869 : 1873, y, frame);
}
['75,00', '70,00', '65,00', '60,00', '55,00', '50,00', '45,00', '40,00', '', '30,00'].forEach((t, i) => {
  if (t) text(1874, Math.round(174 + i * 69.9), t);
});
[['125,000', 908], ['100,000', 934], ['75,000', 959], ['50,000', 985], ['25,000', 1010]].forEach(([t, y]) => {
  text(1873, y + 4, t, '#555', 'axis');
  line(1867, y, 1872, y, frame);
});
for (let y = 888; y < 1036; y += 5) line(1867, y, 1869, y, frame);
text(1867, 89, 'LC:1,32', '#ee1100');
text(1867, 101, 'HC:-4,07', '#1560c8', 'axis');

rect(9, 662, 44, 675, '#1560c8');
text(42, 673, '4,600', '#fff', 'end');
text(40, 685, '.07%', '#1560c8', 'end');
rect(1871, 662, 1911, 675, '#1560c8');
text(1875, 673, '4,600', '#fff');
text(1874, 685, '-4,07%', '#1560c8', 'axis');
out += '<rect x="7.5" y="722.5" width="37" height="28" fill="#ffdd70" stroke="#000"/>';
text(41, 735, '4,577', '#555', 'end');
text(44, 747, '-4,55%', '#0000dd', 'axis end');
out += '<rect x="1870.5" y="722.5" width="41" height="28" fill="#ffdd70" stroke="#000"/>';
text(1876, 735, '4,577');
text(1873, 747, '-4,55%', '#0000dd', 'axis');

text(50, 1051, '09/24', '#444', 'strong');
['09:10', '09:20', '09:30', '09:40', '09:50'].forEach((t, i) => text(gridX[i] + 1, 1051, t));
text(1573, 1051, '10:10');
text(1783, 1051, '10:20');
text(1873, 1051, '10:23:1', '#555', 'axis');
line(1398, 77, 1398, 1036, '#ff0000');
out += '<rect x="1330.5" y="1038.5" width="135" height="17" fill="#ffdd70" stroke="#000"/>';
text(1332, 1051, '2024/09/25(수) 10:01:40');

/* ---------- labels in the plot ---------- */
out += '<rect x="59.5" y="78.5" width="119" height="14" fill="#eeeeee" stroke="#c0c0c0"/><rect x="52.5" y="82.5" width="4" height="5" fill="#bbb" stroke="#888"/>';
text(65, 90, '샤페론 매물대 수(13)', '#333');
out += '<path d="M12.5 96.5h13v13h-13z" stroke="#000"/><path d="M14.5 98.5h9v9h-9zM17.5 98v10M20.5 98v10M14 101.5h10M14 104.5h10" stroke="#666"/>';
text(77, 130, '최고 4,795 (-4,07%, 15:30)', '#ee1100');
text(326, 841, '최저 4,540 (1,32%, 09:19)', '#0000ff');
text(1681, 127, '(고가+시가+저가+종가) 4,699', '#ff6600');
text(1862, 131, '전일종가 4,795 (0,00%)', '#993300', 'end');
text(1862, 139, '10: 4,595', '#00ccff', 'end');
text(1862, 151, '1000: 4,685', '#000', 'end');
text(1862, 151, '448: 4,694', '#000', 'end');
text(1862, 163, '155: 4,689', '#ffcc00', 'end');
text(1862, 163, '5: 4,589', '#ff0000', 'end');
text(1862, 175, '30: 4,585', '#c8e4ff', 'end');
text(1862, 175, '10: 4,585', '#0000ff', 'end');
text(1862, 274, '당일시가 4,745 (-1,04%)', '#00ff00', 'end');
[['거래량: 1,783', '#339999'], ['단순 3: 3,321', '#ffff00'], ['54: 2,459', '#000'], ['13: 2,094', '#00ff00'], ['27: 2,299', '#ccffff'], ['Signal 60: -617,073', '#993300'], ['Signal 100: -606,281', '#ff9900'], ['Signal 150: -596,410', '#00ffff'], ['OBV: -624,391', '#ff9900'], ['Signal 24: -630,481', '#0000ff']].forEach(([t, c], i) => text(1861, 924 + i * 12, t, c, 'end'));
out += '<rect x="1902" y="878" width="8" height="7" fill="#444" stroke="none"/><path d="M1904 880l4 3M1908 880l-4 3" stroke="#fff"/>';

svg.innerHTML = out;
```
